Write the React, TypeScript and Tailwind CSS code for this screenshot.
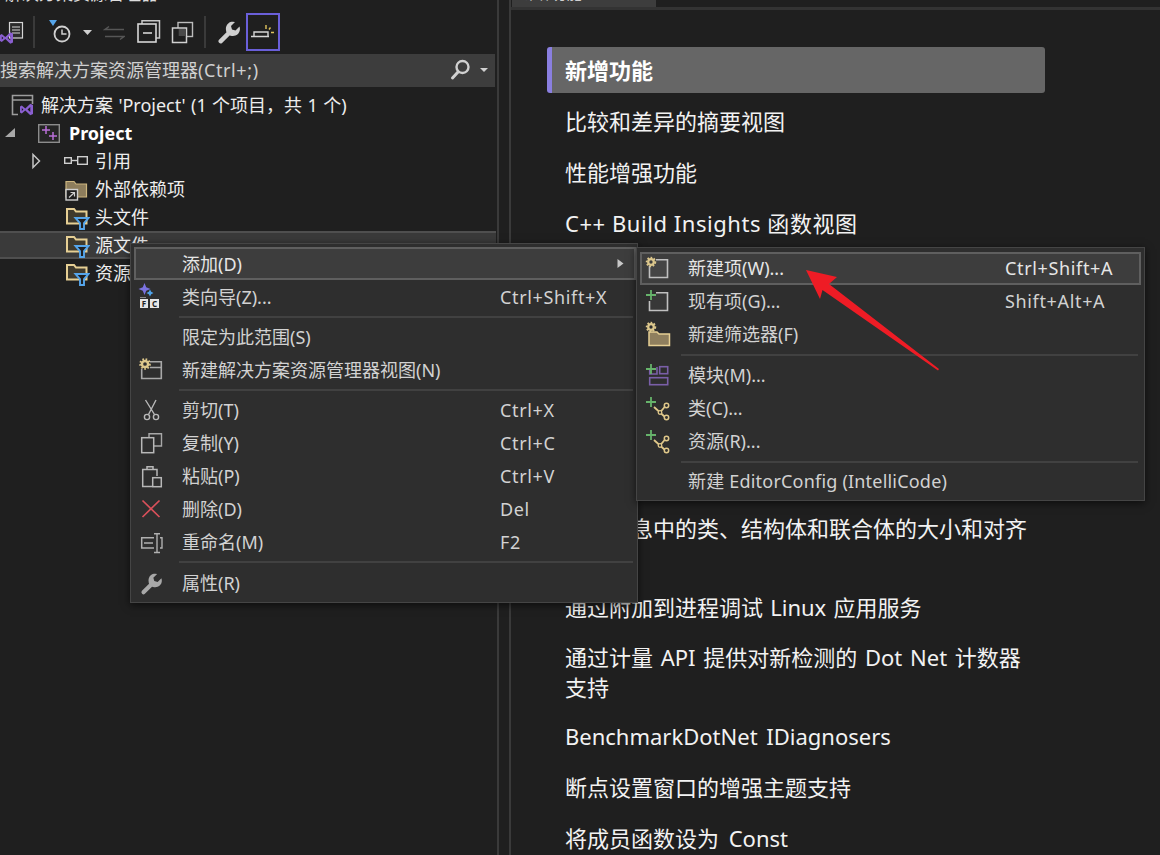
import React from "react";

const FONT = "[font-family:'Noto_Sans','Noto_Sans_CJK_SC',sans-serif]";

function WrenchPath({ x, y, s = 1, fill = "#bdbdbd" }: { x: number; y: number; s?: number; fill?: string }) {
  return (
    <path
      transform={`translate(${x} ${y}) scale(${s})`}
      fill={fill}
      d="M21.5 5.5l-4 4-3.5-1-1-3.5 4-4A7 7 0 0 0 8 9c0 .8.2 1.6.5 2.3L1 18.8a2.2 2.2 0 0 0 3.1 3.1l7.5-7.5c.7.3 1.5.5 2.3.5a7 7 0 0 0 7.6-9.4z"
    />
  );
}

function Gear({ cx, cy, r = 4.5 }: { cx: number; cy: number; r?: number }) {
  return (
    <g>
      <circle cx={cx} cy={cy} r={r * 0.62} fill="none" stroke="#dcc78c" strokeWidth={r * 0.5} />
      <circle cx={cx} cy={cy} r={r * 0.95} fill="none" stroke="#dcc78c" strokeWidth={r * 0.42} strokeDasharray="1.6 1.6" />
    </g>
  );
}

function Plus({ cx, cy, a = 5 }: { cx: number; cy: number; a?: number }) {
  return <path d={`M${cx - a} ${cy}H${cx + a}M${cx} ${cy - a}V${cy + a}`} stroke="#66b36b" strokeWidth={1.8} fill="none" />;
}

function VsMark({ x, y }: { x: number; y: number }) {
  return (
    <path
      transform={`translate(${x} ${y})`}
      fillRule="evenodd"
      fill="#8a5fd0"
      d="M0 3L1.8 2 5.3 5 10.3 .3 13 1.5V10.5L10.3 11.7 5.3 7 1.8 10 0 9zM10.3 3.5L7.5 6 10.3 8.5zM1.8 4.5V7.5L3.4 6z"
    />
  );
}

function Ico({ x, y, children }: { x: number; y: number; children?: React.ReactNode }) {
  return (
    <svg width={46} height={29} viewBox={`${x} ${y} 46 29`} className="shrink-0 overflow-visible">
      {children}
    </svg>
  );
}

function Row({
  icon,
  label,
  shortcut,
  active,
  arrow,
  labelCls,
  shortCls,
}: {
  icon?: React.ReactNode;
  label: string;
  shortcut?: string;
  active?: boolean;
  arrow?: boolean;
  labelCls: string;
  shortCls: string;
}) {
  return (
    <div
      className={
        "flex h-[33px] items-center border-2 text-[18px] leading-none " +
        (active ? "border-[#5f5f5f] bg-[#3d3d3d] text-[#e6e6e6]" : "border-transparent text-[#d2d2d2]")
      }
    >
      <div className="h-[29px] w-[46px] shrink-0">{icon}</div>
      <div className={"whitespace-nowrap " + labelCls}>{label}</div>
      <div className={"flex-1 whitespace-nowrap tracking-[0.65px] " + shortCls}>{shortcut}</div>
      {arrow && (
        <svg width={7} height={9} viewBox="0 0 7 9" className="mr-[10px]">
          <path d="M0.5 0L6.5 4.5L0.5 9z" fill="#c8c8c8" />
        </svg>
      )}
    </div>
  );
}

function Sep({ cls }: { cls: string }) {
  return <div className={"flex flex-col justify-center " + cls}><div className="h-[2px] bg-[#414141]" /></div>;
}

function Tree({ x, y, c }: { x: number; y: number; c?: string }) {
  const s = "#e0c88a";
  return (
    <g>
      <path d={`M${x + 3} ${y + 5}L${x + 9} ${y + 10.5}L${x + 14} ${y + 4.5}M${x + 9} ${y + 10.5}L${x + 14} ${y + 15}`} fill="none" stroke={s} strokeWidth={1.8} />
      <circle cx={x + 9} cy={y + 10.5} r={1.8} fill={c ?? "#2e2e2e"} stroke={s} strokeWidth={1.3} />
      <circle cx={x + 15.5} cy={y + 3.5} r={2.2} fill={c ?? "#2e2e2e"} stroke={s} strokeWidth={1.5} />
      <circle cx={x + 15.5} cy={y + 15.5} r={2.2} fill={c ?? "#2e2e2e"} stroke={s} strokeWidth={1.5} />
    </g>
  );
}

function FolderFilter() {
  return (
    <svg width={26} height={28} viewBox="0 0 26 28" className="shrink-0">
      <path d="M3 6H10L12 8.5H22.5V20.5H3z" fill="#3f3a2d" stroke="#e6cf94" strokeWidth={2} />
      <path d="M11.5 15H24.5L20 20V26H16V20z" fill="#1f1f1f" stroke="#55a5ea" strokeWidth={1.9} />
    </svg>
  );
}

function TreeRow({ cls, icon, text, bold }: { cls: string; icon?: React.ReactNode; text: string; bold?: boolean }) {
  return (
    <div className={"flex h-[28px] items-center whitespace-nowrap text-[18px] text-[#ededed] " + cls}>
      {icon}
      <span className={bold ? "font-bold text-white" : ""}>{text}</span>
    </div>
  );
}

export default function App() {
  return (
    <div className={"relative flex h-[855px] w-[1160px] overflow-hidden bg-[#1f1f1f] " + FONT}>
      {/* Solution Explorer */}
      <div className="flex h-full w-[499px] shrink-0 flex-col border-r-2 border-[#3a3a3a]">
        <div className="h-[8px] overflow-hidden">
          <div className="-mt-[18px] ml-[5px] whitespace-nowrap text-[17px] leading-[24px] text-[#dddddd]">解决方案资源管理器</div>
        </div>

        {/* toolbar */}
        <div className="flex h-[46px] items-center pt-[2px]">
          <svg width={24} height={28} viewBox="0 18 24 28" className="shrink-0">
            <rect x={9.5} y={22.5} width={13} height={15.5} fill="#2b2b2b" stroke="#d5d5d5" strokeWidth={1.2} />
            <path d="M12 27h8M12 30h8M12 33h8" stroke="#d5d5d5" strokeWidth={1.2} />
            <VsMark x={0} y={32} />
          </svg>
          <div className="ml-[9px] h-[32px] w-[2px] bg-[#3a3a3a]" />
          <svg width={24} height={28} viewBox="47 18 24 28" className="ml-[12px] shrink-0">
            <path d="M49 20h8l-4 6z" fill="#55a5ea" />
            <circle cx={62} cy={34} r={7.5} fill="none" stroke="#d0d0d0" strokeWidth={1.8} />
            <path d="M62 29.5V34H66.5" fill="none" stroke="#d0d0d0" strokeWidth={1.5} />
          </svg>
          <svg width={11} height={28} viewBox="82 18 11 28" className="ml-[11px] shrink-0">
            <path d="M83 30h9l-4.5 5z" fill="#d0d0d0" />
          </svg>
          <svg width={22} height={28} viewBox="103 18 22 28" className="ml-[10px] shrink-0">
            <path d="M124 29.5H105L109 26.5M105 36.5H124L120 39.5" fill="none" stroke="#565656" strokeWidth={1.5} />
          </svg>
          <svg width={24} height={28} viewBox="137 18 24 28" className="ml-[12px] shrink-0">
            <path d="M142 24V20.7H159.5V38H156" fill="none" stroke="#c8c8c8" strokeWidth={1.5} />
            <rect x={138} y={24} width={18} height={18} fill="none" stroke="#d6d6d6" strokeWidth={1.6} />
            <path d="M143 33H152" stroke="#d6d6d6" strokeWidth={1.6} />
          </svg>
          <svg width={23} height={28} viewBox="171 18 23 28" className="ml-[10px] shrink-0">
            <rect x={178} y={22.5} width={14.5} height={14} fill="none" stroke="#bcbcbc" strokeWidth={1.4} />
            <rect x={172.5} y={28} width={14} height={14.5} fill="#1f1f1f" stroke="#d0d0d0" strokeWidth={1.5} />
            <rect x={178.7} y={29} width={7} height={7} fill="#4a4a4a" />
          </svg>
          <div className="ml-[10px] h-[32px] w-[2px] bg-[#3a3a3a]" />
          <svg width={24} height={28} viewBox="217 18 24 28" className="ml-[11px] shrink-0">
            <WrenchPath x={218} y={21} s={1} fill="#cfcfcf" />
          </svg>
          <div className="ml-[5px] h-[38px] w-[34px] shrink-0 border-2 border-[#6a5fd9]">
            <svg width={30} height={34} viewBox="248 15 30 34">
              <path d="M251 36.5H269M254 36V32H268V36" fill="none" stroke="#d6d6d6" strokeWidth={1.4} />
              <path d="M266 25V29M270.5 27.5L269 29.5M271 32.5H274" fill="none" stroke="#e0c45c" strokeWidth={1.4} />
            </svg>
          </div>
        </div>

        {/* search */}
        <div className="mr-[2px] flex h-[33px] items-center bg-[#3d3d3d] text-[18px] text-[#d0d0d0]">
          <span className="flex-1 whitespace-nowrap">搜索解决方案资源管理器<span className="tracking-[0.6px]">(Ctrl+;)</span></span>
          <svg width={40} height={33} viewBox="451 54 40 33" className="mr-[5px] shrink-0">
            <circle cx={463.5} cy={67} r={6} fill="none" stroke="#d0d0d0" strokeWidth={2.4} />
            <path d="M459 72L453.5 78" stroke="#d0d0d0" strokeWidth={3} strokeLinecap="round" />
            <path d="M481 68h8l-4 4z" fill="#d0d0d0" />
          </svg>
        </div>

        {/* tree */}
        <div className="mt-[4px] flex flex-col">
          <TreeRow
            cls="pl-[10px] [word-spacing:0.7px]"
            text="解决方案 'Project' (1 个项目，共 1 个)"
            icon={
              <svg width={31} height={28} viewBox="10 91 31 28" className="shrink-0">
                <path d="M18 114.5H12.5V95.5H32.5V104M12.5 100H32.5" fill="none" stroke="#9c9c9c" strokeWidth={1.6} />
                <VsMark x={20} y={103.5} />
              </svg>
            }
          />
          <TreeRow
            cls="pl-[4px]"
            bold
            text="Project"
            icon={
              <svg width={65} height={28} viewBox="4 119 65 28" className="shrink-0">
                <path d="M15 128V137H5z" fill="#a8a8a8" />
                <rect x={38.7} y={124.7} width={20.6} height={17.6} fill="#252525" stroke="#8c8c8c" strokeWidth={1.4} />
                <path d="M42 130H50M46 126V134M49 136H57M53 132V140" stroke="#b96fd8" strokeWidth={1.5} />
              </svg>
            }
          />
          <TreeRow
            cls="pl-[30px]"
            text="引用"
            icon={
              <svg width={65} height={28} viewBox="30 147 65 28" className="shrink-0">
                <path d="M33 154.5L39.5 161L33 167.5z" fill="none" stroke="#c4c4c4" strokeWidth={1.5} />
                <rect x={64.7} y={157.7} width={6.6} height={5.6} fill="none" stroke="#cfcfcf" strokeWidth={1.4} />
                <rect x={77.7} y={156.7} width={9.6} height={7.6} fill="none" stroke="#cfcfcf" strokeWidth={1.4} />
                <path d="M71.5 160.5H77.5" stroke="#cfcfcf" strokeWidth={1.4} />
              </svg>
            }
          />
          <TreeRow
            cls="pl-[64px]"
            text="外部依赖项"
            icon={
              <svg width={31} height={28} viewBox="64 175 31 28" className="shrink-0">
                <path d="M66 181.5H74L76 184H86.5V197H66z" fill="#8d7d5c" stroke="#cdb67f" strokeWidth={1.2} />
                <rect x={66} y={189.5} width={11.5} height={10.5} fill="#1f1f1f" stroke="#cfcfcf" strokeWidth={1.4} />
                <path d="M69 197.5L74.5 192.5M70.5 192.5H74.5V196.5" fill="none" stroke="#cfcfcf" strokeWidth={1.2} />
              </svg>
            }
          />
          <TreeRow
            cls="pl-[64px]"
            text="头文件"
            icon={<div className="flex w-[31px] shrink-0"><FolderFilter /></div>}
          />
          <TreeRow
            cls="mr-[1px] box-border border-y-2 border-[#4f4f4f] bg-[#3a3a3a] pl-[64px]"
            text="源文件"
            icon={<div className="flex w-[31px] shrink-0"><FolderFilter /></div>}
          />
          <TreeRow
            cls="pl-[64px]"
            text="资源文件"
            icon={<div className="flex w-[31px] shrink-0"><FolderFilter /></div>}
          />
        </div>
      </div>

      {/* Document */}
      <div className="ml-[10px] flex h-full flex-1 flex-col border-l-2 border-[#3a3a3a]">
        <div className="h-[7px] overflow-hidden">
          <div className="ml-[1px] h-[7px] w-[144px] overflow-hidden bg-[#3d3d3d]">
            <div className="-mt-[19px] ml-[6px] whitespace-nowrap text-[16px] leading-[24px] text-[#cfcfcf]">新增功能.md</div>
          </div>
        </div>
        <div className="h-[3px] bg-[#333333]" />
        <div className="ml-[36px] mt-[37px] flex h-[46px] w-[498px] items-center rounded-[3px] border-l-[5px] border-[#8a7fe0] bg-[#666666] pl-[13px] text-[22px] font-bold text-white">
          新增功能
        </div>
        <div className="ml-[54px] text-[22px] leading-[30px] text-[#f2f2f2]">
          <p className="mt-[13px] whitespace-nowrap">比较和差异的摘要视图</p>
          <p className="mt-[21px] whitespace-nowrap">性能增强功能</p>
          <p className="mt-[21px] whitespace-nowrap tracking-[0.55px]">C++ Build Insights 函数视图</p>
          <p className="mt-[275px] whitespace-nowrap">调试信息中的类、结构体和联合体的大小和对齐<br />方式</p>
          <p className="mt-[19px] whitespace-nowrap [word-spacing:1.5px]">通过附加到进程调试 Linux 应用服务</p>
          <p className="mt-[20px] whitespace-nowrap [word-spacing:2px]">通过计量 API 提供对新检测的 Dot Net 计数器<br />支持</p>
          <p className="mt-[19px] whitespace-nowrap [word-spacing:3px]">BenchmarkDotNet IDiagnosers</p>
          <p className="mt-[21px] whitespace-nowrap">断点设置窗口的增强主题支持</p>
          <p className="mt-[21px] whitespace-nowrap [word-spacing:4px]">将成员函数设为 Const</p>
        </div>
      </div>

      {/* Context menu */}
      <div className="absolute left-[130px] top-[243px] h-[360px] w-[508px] border border-[#454545] bg-[#2e2e2e] pl-[3px] pr-[1px] pt-[3px] shadow-[0_2px_8px_rgba(0,0,0,0.6)]">
        <Row labelCls="w-[318px]" shortCls="" active arrow label="添加(D)" />
        <Row
          labelCls="w-[318px]"
          shortCls=""
          label="类向导(Z)..."
          shortcut="Ctrl+Shift+X"
          icon={
            <Ico x={136} y={282}>
              <path d="M144.5 283L146.2 287.3L150.5 289L146.2 290.7L144.5 295L142.8 290.7L138.5 289L142.8 287.3z" fill="#7a72e0" />
              <path d="M150 289.5L151.2 291.8L153.5 293L151.2 294.2L150 296.5L148.8 294.2L146.5 293L148.8 291.8z" fill="#4fa3ea" />
              <path d="M140 297.5H146" stroke="#8a8a8a" strokeWidth={1} />
              <rect x={140} y={299} width={8} height={9} fill="#e6e6e6" />
              <rect x={150} y={299} width={9} height={9} fill="#e6e6e6" />
              <text x={144} y={307} textAnchor="middle" fontSize={8} fontWeight={700} fill="#222">F</text>
              <text x={154.5} y={307} textAnchor="middle" fontSize={8} fontWeight={700} fill="#222">C</text>
            </Ico>
          }
        />
        <Sep cls="ml-[45px] mr-[3px] h-[7px]" />
        <Row labelCls="w-[318px]" shortCls="" label="限定为此范围(S)" />
        <Row
          labelCls="w-[318px]"
          shortCls=""
          label="新建解决方案资源管理器视图(N)"
          icon={
            <Ico x={136} y={355}>
              <path d="M150 361.7H161.3V378.5H141.7V369M150 367.5H161" fill="none" stroke="#a8a8a8" strokeWidth={1.6} />
              <Gear cx={145} cy={364} r={5} />
            </Ico>
          }
        />
        <Sep cls="ml-[45px] mr-[3px] h-[7px]" />
        <Row
          labelCls="w-[318px]"
          shortCls=""
          label="剪切(T)"
          shortcut="Ctrl+X"
          icon={
            <Ico x={136} y={395}>
              <path d="M145.5 400L154.5 414.5M156 400L148.5 414.5" fill="none" stroke="#b8b8b8" strokeWidth={1.4} />
              <circle cx={147} cy={417} r={2.6} fill="none" stroke="#b8b8b8" strokeWidth={1.4} />
              <circle cx={156} cy={417} r={2.6} fill="none" stroke="#b8b8b8" strokeWidth={1.4} />
            </Ico>
          }
        />
        <Row
          labelCls="w-[318px]"
          shortCls=""
          label="复制(Y)"
          shortcut="Ctrl+C"
          icon={
            <Ico x={136} y={428}>
              <path d="M149 437V433.7H161.5V446H154" fill="none" stroke="#a8a8a8" strokeWidth={1.4} />
              <rect x={141.7} y={437.7} width={12} height={15} fill="none" stroke="#b8b8b8" strokeWidth={1.5} />
            </Ico>
          }
        />
        <Row
          labelCls="w-[318px]"
          shortCls=""
          label="粘贴(P)"
          shortcut="Ctrl+V"
          icon={
            <Ico x={136} y={461}>
              <path d="M152 486.5H142.7V469.5H157V476M147 470V466.7H153V470" fill="none" stroke="#b8b8b8" strokeWidth={1.5} />
              <rect x={152.7} y={477.7} width={8.6} height={9} fill="none" stroke="#b8b8b8" strokeWidth={1.5} />
            </Ico>
          }
        />
        <Row
          labelCls="w-[318px]"
          shortCls=""
          label="删除(D)"
          shortcut="Del"
          icon={
            <Ico x={136} y={494}>
              <path d="M142.5 500.5L159.5 517M159.5 500.5L142.5 517" stroke="#d9505a" strokeWidth={1.7} />
            </Ico>
          }
        />
        <Row
          labelCls="w-[318px]"
          shortCls=""
          label="重命名(M)"
          shortcut="F2"
          icon={
            <Ico x={136} y={527}>
              <path d="M154 537.7H141.7V548H154M144 543H153" fill="none" stroke="#b0b0b0" strokeWidth={1.5} />
              <path d="M154 533.7H160M157 533.7V552.5M154 552.5H160M160 537.7H162V548H160" fill="none" stroke="#b0b0b0" strokeWidth={1.4} />
            </Ico>
          }
        />
        <Sep cls="ml-[45px] mr-[3px] h-[8px]" />
        <Row
          labelCls="w-[318px]"
          shortCls=""
          label="属性(R)"
          icon={
            <Ico x={136} y={568}>
              <WrenchPath x={141} y={573} s={0.95} fill="#a8a8a8" />
            </Ico>
          }
        />
      </div>

      {/* Submenu */}
      <div className="absolute left-[636px] top-[247px] h-[254px] w-[509px] border border-[#454545] bg-[#2e2e2e] pl-[3px] pr-[3px] pt-[4px] shadow-[0_2px_8px_rgba(0,0,0,0.6)]">
        <Row
          labelCls="w-[317px] pb-[2px]"
          shortCls="pb-[2px]"
          active
          label="新建项(W)..."
          shortcut="Ctrl+Shift+A"
          icon={
            <Ico x={642} y={254}>
              <path d="M656 259.7H667.5V277.5H649.5V266" fill="#454545" stroke="#c0c0c0" strokeWidth={1.6} />
              <Gear cx={651} cy={262} />
            </Ico>
          }
        />
        <Row
          labelCls="w-[317px] pb-[2px]"
          shortCls="pb-[2px]"
          label="现有项(G)..."
          shortcut="Shift+Alt+A"
          icon={
            <Ico x={642} y={287}>
              <path d="M656 292.7H667.5V310.5H649.5V301" fill="#383838" stroke="#c0c0c0" strokeWidth={1.6} />
              <Plus cx={651} cy={295} />
            </Ico>
          }
        />
        <Row
          labelCls="w-[317px] pb-[2px]"
          shortCls="pb-[2px]"
          label="新建筛选器(F)"
          icon={
            <Ico x={642} y={320}>
              <path d="M649 332H657L659 334H669.5V345.5H649z" fill="#8f7f5e" stroke="#e6cf94" strokeWidth={1.5} />
              <Gear cx={651} cy={327} />
            </Ico>
          }
        />
        <Sep cls="ml-[41px] mr-[3px] h-[8px]" />
        <Row
          labelCls="w-[317px] pb-[2px]"
          shortCls="pb-[2px]"
          label="模块(M)..."
          icon={
            <Ico x={642} y={361}>
              <rect x={659.7} y={366.7} width={8} height={7} fill="none" stroke="#7a5fa8" strokeWidth={1.6} />
              <rect x={649.7} y={377.7} width={18} height={7} fill="none" stroke="#7a5fa8" strokeWidth={1.6} />
              <path d="M649.7 370V374H657V367" fill="none" stroke="#7a5fa8" strokeWidth={1.6} />
              <Plus cx={651} cy={369} />
            </Ico>
          }
        />
        <Row
          labelCls="w-[317px] pb-[2px]"
          shortCls="pb-[2px]"
          label="类(C)..."
          icon={
            <Ico x={642} y={394}>
              <Tree x={651} y={402} />
              <Plus cx={651} cy={402} />
            </Ico>
          }
        />
        <Row
          labelCls="w-[317px] pb-[2px]"
          shortCls="pb-[2px]"
          label="资源(R)..."
          icon={
            <Ico x={642} y={427}>
              <Tree x={651} y={435} />
              <Plus cx={651} cy={435} />
            </Ico>
          }
        />
        <Sep cls="ml-[41px] mr-[3px] h-[7px]" />
        <Row labelCls="w-[317px] pb-[2px] tracking-[0.2px]" shortCls="pb-[2px]" label="新建 EditorConfig (IntelliCode)" />
      </div>

      {/* Red annotation arrow */}
      <svg width={140} height={110} viewBox="804 266 140 110" className="absolute left-[804px] top-[266px]">
        <path d="M806 270L837 277L829 284L939 369L938 370.5L822.5 290L820 299z" fill="#ee1c25" />
      </svg>
    </div>
  );
}
